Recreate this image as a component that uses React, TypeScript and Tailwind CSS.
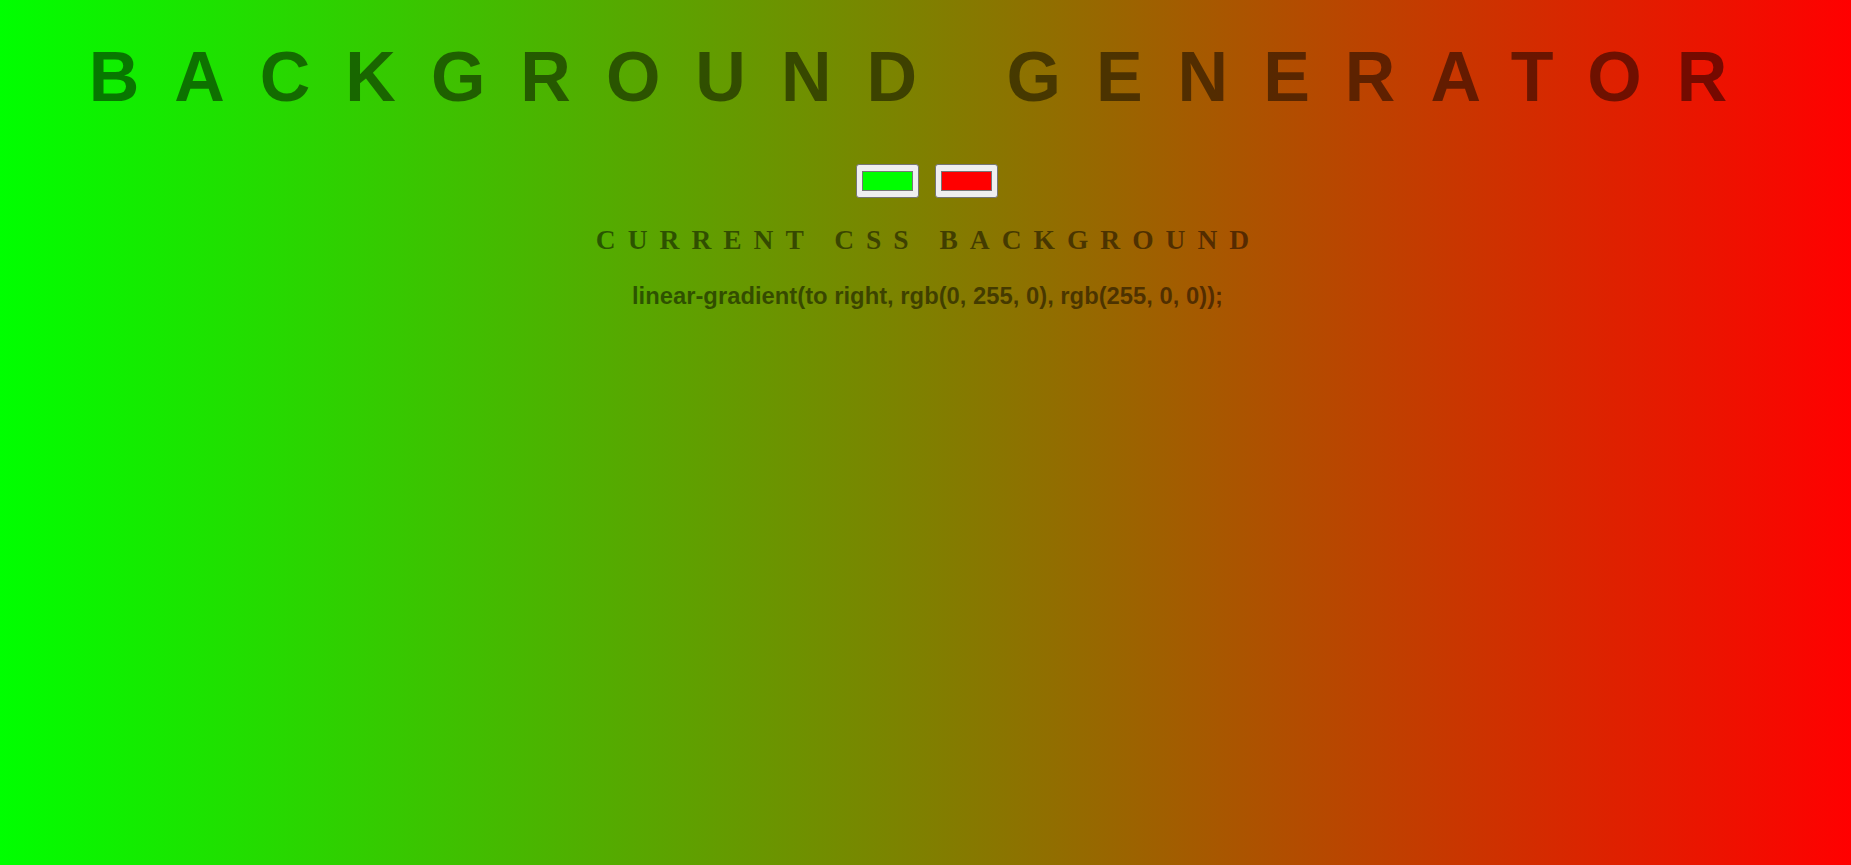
import { useState } from "react";

export default function App() {
  const [color1, setColor1] = useState("#00ff00");
  const [color2, setColor2] = useState("#ff0000");

  const toRgb = (hex: string) => {
    const n = parseInt(hex.slice(1), 16);
    return `rgb(${(n >> 16) & 255}, ${(n >> 8) & 255}, ${n & 255})`;
  };

  const gradient = `linear-gradient(to right, ${toRgb(color1)}, ${toRgb(color2)})`;

  const inputClass =
    "w-[63px] h-[34px] bg-[#efefef] border border-[#767676] rounded-[3px] px-[2.5px] py-[1.25px] cursor-pointer [&::-webkit-color-swatch-wrapper]:px-[2.5px] [&::-webkit-color-swatch-wrapper]:py-[5px] [&::-webkit-color-swatch]:border-[#777]";

  return (
    <div
      className="min-h-screen w-full text-center text-black/50 overflow-hidden"
      style={{ background: gradient }}
    >
      <h1 className="pt-[37px] text-[70px] leading-[80px] font-bold tracking-[0.5em] uppercase font-['Liberation_Sans',Arial,sans-serif] whitespace-nowrap">
        Background Generator
      </h1>

      <div className="flex justify-center gap-[16px] mt-[47px] pl-[2px]">
        <input
          type="color"
          value={color1}
          onChange={(e) => setColor1(e.target.value)}
          className={inputClass}
        />
        <input
          type="color"
          value={color2}
          onChange={(e) => setColor2(e.target.value)}
          className={inputClass}
        />
      </div>

      <h3 className="mt-[27px] pl-[6px] text-[27.5px] leading-[30px] font-bold tracking-[12px] uppercase font-['Liberation_Serif','Times_New_Roman',serif]">
        Current CSS Background
      </h3>

      <h3 className="mt-[27px] pl-[4px] text-[23.8px] leading-[27px] font-bold font-['Liberation_Sans',Arial,sans-serif]">
        {gradient};
      </h3>
    </div>
  );
}
